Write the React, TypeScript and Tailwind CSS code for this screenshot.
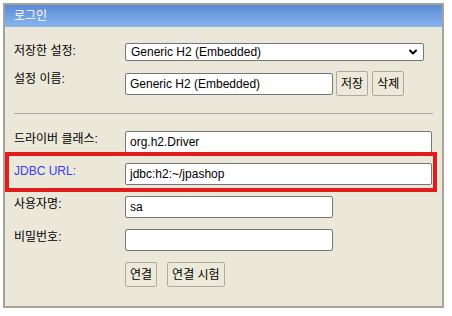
import { ChevronDown } from "lucide-react"

const font = { fontFamily: '"Liberation Sans", Arial, "Noto Sans CJK KR", sans-serif' }

function Row({ label, children, className = "", labelClass = "text-black" }: { label: string; children: React.ReactNode; className?: string; labelClass?: string }) {
  return (
    <div className={`flex items-start ${className}`}>
      <div className={`w-[120px] shrink-0 pl-[9px] text-[12px] leading-[16px] ${labelClass}`}>{label}</div>
      <div className="flex items-center">{children}</div>
    </div>
  )
}

function TextBox({ value, w }: { value: string; w: string }) {
  return (
    <div className={`${w} h-[22px] bg-white border border-[#767676] rounded-[2px] px-[4px] flex items-center text-[12px] text-black`}>
      {value}
    </div>
  )
}

function Btn({ label }: { label: string }) {
  return (
    <div className="h-[25px] px-[4px] flex items-center border border-[#adab9f] rounded-[2px] bg-[#ece9d8] text-[12px] text-black">
      {label}
    </div>
  )
}

export default function App() {
  return (
    <div className="w-[452px] h-[316px] bg-white pt-[3px] pl-[3px]" style={font}>
      <div className="w-[441px] h-[305px] border-2 border-[#a6a498] bg-[#ebe8da] relative">
        {/* Header */}
        <div className="h-[22px] bg-gradient-to-b from-[#5a8ad6] to-[#8ab6ee] flex items-center pl-[9px] text-[12px] text-white">
          로그인
        </div>

        <div className="flex flex-col">
          <Row label="저장한 설정:" className="mt-[16px]">
            <div className="w-[299px] h-[18px] bg-white border border-[#767676] rounded-[2px] pl-[5px] pr-[4px] flex items-center justify-between text-[12px] text-black">
              <span>Generic H2 (Embedded)</span>
              <ChevronDown className="w-[12px] h-[12px]" strokeWidth={4} />
            </div>
          </Row>

          <Row label="설정 이름:" className="mt-[10px]">
            <TextBox value="Generic H2 (Embedded)" w="w-[208px]" />
            <div className="ml-[3px] flex gap-[4px]">
              <Btn label="저장" />
              <Btn label="삭제" />
            </div>
          </Row>

          <div className="mt-[17px] ml-[9px] w-[419px] h-px bg-[#a9a9a9]" />

          <Row label="드라이버 클래스:" className="mt-[17px]">
            <TextBox value="org.h2.Driver" w="w-[307px]" />
          </Row>

          <Row label="JDBC URL:" className="mt-[10px]" labelClass="text-[#3b3bf0]">
            <TextBox value="jdbc:h2:~/jpashop" w="w-[307px]" />
          </Row>

          <Row label="사용자명:" className="mt-[11px]">
            <TextBox value="sa" w="w-[208px]" />
          </Row>

          <Row label="비밀번호:" className="mt-[11px]">
            <TextBox value="" w="w-[208px]" />
          </Row>

          <Row label="" className="mt-[11px]">
            <div className="flex gap-[10px]">
              <Btn label="연결" />
              <Btn label="연결 시험" />
            </div>
          </Row>
        </div>

        {/* annotation highlight */}
        <div className="absolute left-[0px] top-[147px] w-[432px] h-[40px] border-4 border-[#e31b1b]" />
      </div>
    </div>
  )
}
